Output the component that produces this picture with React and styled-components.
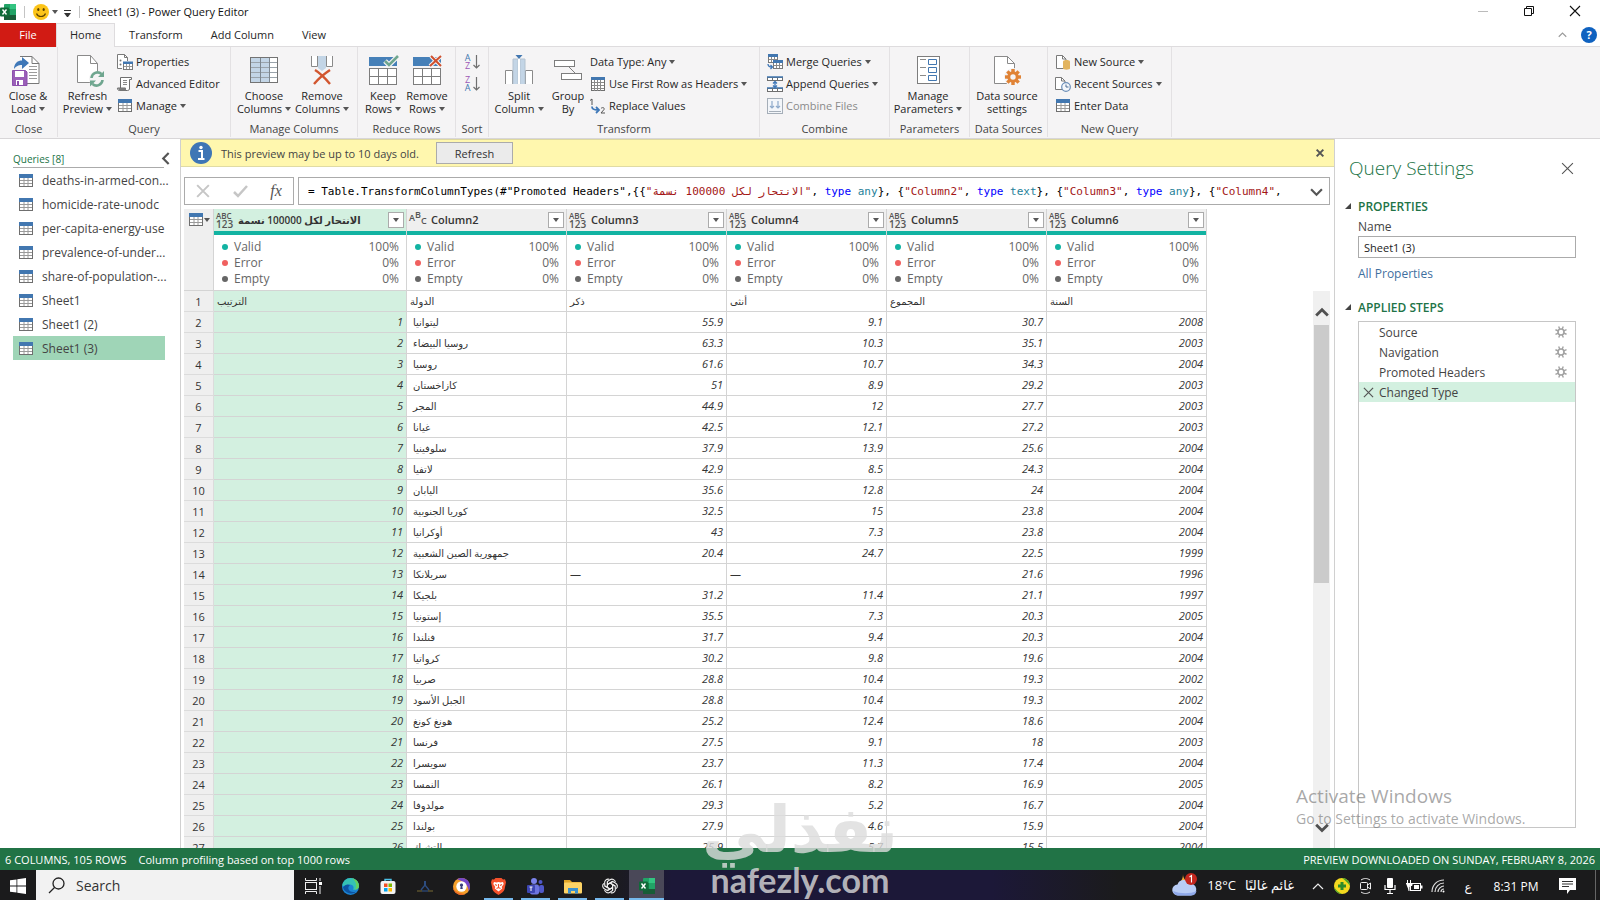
import React from 'react'
import styled, { createGlobalStyle } from 'styled-components'

const columns = [
  { name: 'الانتحار لكل 100000 نسمة', type: 'any', width: 193, selected: true },
  { name: 'Column2', type: 'text', width: 160 },
  { name: 'Column3', type: 'any', width: 160 },
  { name: 'Column4', type: 'any', width: 160 },
  { name: 'Column5', type: 'any', width: 160 },
  { name: 'Column6', type: 'any', width: 160 },
]

const rows = [
  ['الترتيب', 'الدولة', 'ذكر', 'أنثى', 'المجموع', 'السنة'],
  [1, 'ليتوانيا', 55.9, 9.1, 30.7, 2008],
  [2, 'روسيا البيضاء', 63.3, 10.3, 35.1, 2003],
  [3, 'روسيا', 61.6, 10.7, 34.3, 2004],
  [4, 'كازاخستان', 51, 8.9, 29.2, 2003],
  [5, 'المجر', 44.9, 12, 27.7, 2003],
  [6, 'غيانا', 42.5, 12.1, 27.2, 2003],
  [7, 'سلوفينيا', 37.9, 13.9, 25.6, 2004],
  [8, 'لاتفيا', 42.9, 8.5, 24.3, 2004],
  [9, 'اليابان', 35.6, 12.8, 24, 2004],
  [10, 'كوريا الجنوبية', 32.5, 15, 23.8, 2004],
  [11, 'أوكرانيا', 43, 7.3, 23.8, 2004],
  [12, 'جمهورية الصين الشعبية', 20.4, 24.7, 22.5, 1999],
  [13, 'سريلانكا', '—', '—', 21.6, 1996],
  [14, 'بلجيكا', 31.2, 11.4, 21.1, 1997],
  [15, 'إستونيا', 35.5, 7.3, 20.3, 2005],
  [16, 'فنلندا', 31.7, 9.4, 20.3, 2004],
  [17, 'كرواتيا', 30.2, 9.8, 19.6, 2004],
  [18, 'صربيا', 28.8, 10.4, 19.3, 2002],
  [19, 'الجبل الأسود', 28.8, 10.4, 19.3, 2002],
  [20, 'هونغ كونغ', 25.2, 12.4, 18.6, 2004],
  [21, 'فرنسا', 27.5, 9.1, 18, 2003],
  [22, 'سويسرا', 23.7, 11.3, 17.4, 2004],
  [23, 'النمسا', 26.1, 8.2, 16.9, 2005],
  [24, 'مولدوفا', 29.3, 5.2, 16.7, 2004],
  [25, 'بولندا', 27.9, 4.6, 15.9, 2004],
  [26, 'التشيك', 25.9, 5.7, 15.5, 2004],
]

const queries = [
  'deaths-in-armed-con...',
  'homicide-rate-unodc',
  'per-capita-energy-use',
  'prevalence-of-under...',
  'share-of-population-...',
  'Sheet1',
  'Sheet1 (2)',
  'Sheet1 (3)',
]

const stats = [
  { label: 'Valid', value: '100%', color: '#12b3a2' },
  { label: 'Error', value: '0%', color: '#f0605f' },
  { label: 'Empty', value: '0%', color: '#666666' },
]

const steps = ['Source', 'Navigation', 'Promoted Headers', 'Changed Type']

const isArabic = (v) => /[\u0600-\u06ff]/.test(v)

/* ---------- icons ---------- */

const TableIcon = () => (
  <svg width="14" height="13" viewBox="0 0 14 13">
    <rect x="0.5" y="0.5" width="13" height="12" fill="#fff" stroke="#6f6f6f" />
    <rect width="14" height="4" fill="#4277b0" />
    <path d="M5 4v8M9 4v8M1 6.5h12M1 9.5h12" stroke="#9a9a9a" />
  </svg>
)

const ExcelIcon = () => (
  <svg width="16" height="16" viewBox="0 0 16 16">
    <rect x="4" y="0" width="12" height="16" rx="1" fill="#21a366" />
    <rect x="10" y="0" width="6" height="5" fill="#33c481" />
    <rect x="4" y="5" width="6" height="6" fill="#107c41" />
    <rect x="4" y="11" width="12" height="5" fill="#185c37" />
    <rect x="0" y="3.5" width="9" height="9" rx="1" fill="#0f6b39" />
    <path d="M2.5 5.5l4 5M6.5 5.5l-4 5" stroke="#fff" strokeWidth="1.4" />
  </svg>
)

const SmileIcon = () => (
  <svg width="16" height="16" viewBox="0 0 16 16">
    <circle cx="8" cy="8" r="8" fill="#fcc419" />
    <ellipse cx="5.3" cy="5.5" rx="1.1" ry="1.6" fill="#5d4200" />
    <ellipse cx="10.7" cy="5.5" rx="1.1" ry="1.6" fill="#5d4200" />
    <path d="M3.5 9.5c1.5 4 7.5 4 9 0" fill="none" stroke="#5d4200" strokeWidth="1.2" />
  </svg>
)

const CloseLoadIcon = () => (
  <svg width="30" height="32" viewBox="2 0 30 32">
    <path d="M9 2.5h12l7 7v20H14" fill="#fff" stroke="#787878" />
    <path d="M21 2.5v7h7" fill="none" stroke="#787878" />
    <path d="M18 12.5h8M18 15.5h8M18 18.5h8M18 21.5h8M18 24.5h8" stroke="#9b9b9b" />
    <path d="M3 15c0-6 4-8.500 8-8.500V3l7 6-7 6v-4c-4 0-5.500 1-8 4z" fill="#3f78b8" />
    <path d="M1.5 16.500h13l1.500 1.500v13.500H1.500z" fill="#9a5fb8" stroke="#8c4fae" />
    <rect x="4" y="17" width="9" height="6" fill="#fff" />
    <rect x="5" y="26" width="7" height="5" fill="#fff" />
    <rect x="6" y="27" width="2" height="4" fill="#8c4fae" />
  </svg>
)

const RefreshIcon = () => (
  <svg width="30" height="32" viewBox="0 0 30 32">
    <path d="M4.5 1.5h13l7 8v19h-20z" fill="#fff" stroke="#8a8a8a" />
    <path d="M17.5 1.5v8h7" fill="none" stroke="#8a8a8a" />
    <circle cx="24" cy="25" r="8" fill="#f5f4f5" />
    <path d="M18.5 24a6 6 0 0 1 10-4M29.5 26a6 6 0 0 1-10 4" fill="none" stroke="#6fa68f" strokeWidth="2.6" />
    <path d="M31 17v6h-6zM17 32.5v-6h6z" fill="#6fa68f" />
  </svg>
)

const PropertiesIcon = () => (
  <svg width="16" height="16" viewBox="0 0 16 16">
    <path d="M5 14.5H.5v-14h7l3 3V7" fill="#fff" stroke="#7a7a7a" />
    <path d="M7.5.5v3h3" fill="none" stroke="#7a7a7a" />
    <circle cx="3.5" cy="6.5" r="1" fill="#777" />
    <circle cx="3.5" cy="10.5" r="1" fill="#777" />
    <rect x="6.5" y="8.5" width="9" height="7" fill="#fff" stroke="#7a7a7a" />
    <rect x="6" y="7.500" width="10" height="2.500" fill="#4277b0" />
    <path d="M9.5 10v5M12.5 10v5M7 12.500h8" stroke="#999" />
  </svg>
)

const EditorIcon = () => (
  <svg width="16" height="16" viewBox="0 0 16 16">
    <path d="M3.5 12V1.5h11v2h-2V13a2 2 0 0 1-2 1.500h-8A2 2 0 0 1 .5 12h8v1.500" fill="#fff" stroke="#6f6f6f" />
    <path d="M1 12h8v2.500H2z" fill="#7d7d7d" />
    <path d="M6 4.5h4M6 6.5h4M6 8.5h4" stroke="#8a8a8a" />
  </svg>
)

const ChooseColumnsIcon = () => (
  <svg width="28" height="26" viewBox="0 0 28 26">
    <rect x="0.5" y="0.5" width="27" height="25" fill="#fff" />
    <rect x="1" y="1" width="18" height="24" fill="#c3d5e6" />
    <path d="M0 5.5h28M0 10.5h28M0 15.5h28M0 20.5h28" stroke="#9aa3ab" />
    <path d="M10.5 0v26M19.5 0v26" stroke="#7d8790" />
    <rect x="0.5" y="0.5" width="27" height="25" fill="none" stroke="#737373" />
  </svg>
)

const RemoveColumnsIcon = () => (
  <svg width="24" height="30" viewBox="0 0 24 30">
    <path d="M1.5 1v10.500h6V1M16.5 1v10.500h6V1" fill="#fff" stroke="#8a8a8a" />
    <path d="M8 1h8v12l-4 3-4-3z" fill="#c3d5e6" />
    <path d="M5 15c5 3 10 8 15 14M20 15c-6 4-11 8-16 14" stroke="#d2562f" strokeWidth="2.4" fill="none" />
  </svg>
)

const RowsIcon = ({ remove }) => (
  <svg width="30" height="30" viewBox="0 0 30 30">
    <rect x="1" y="2" width="28" height="9" fill="#4680b8" />
    <rect x="1.5" y="13.5" width="27" height="16" fill="#fff" stroke="#7d7d7d" />
    <path d="M10.5 13v17M19.5 13v17M1 21.5h28" stroke="#7d7d7d" />
    {remove ? (
      <>
        <path d="M19 1l10 10M29 1L18 11" stroke="#f5f4f5" strokeWidth="4" />
        <path d="M19 1l10 10M29 1L18 11" stroke="#cf4f2d" strokeWidth="2" />
      </>
    ) : (
      <>
        <path d="M17 6l4 4 9-9" fill="none" stroke="#f5f4f5" strokeWidth="5" />
        <path d="M17 6l4 4 9-9" fill="none" stroke="#6fa68f" strokeWidth="2.6" />
      </>
    )}
  </svg>
)

const SplitIcon = () => (
  <svg width="28" height="30" viewBox="0 0 28 30">
    <path d="M.5 29V15.500h7V29M20.500 29V15.500h7V29" fill="#fff" stroke="#8a8a8a" />
    <path d="M8 29V4h5v25M15 29V4h5v25" fill="#c3d5e6" stroke="#b3c2d0" />
    <path d="M13 4h2v25h-2z" fill="#fff" />
    <path d="M10.5 0h7L14 4z" fill="#4277b0" />
  </svg>
)

const GroupIcon = () => (
  <svg width="28" height="22" viewBox="0 0 28 22">
    <path d="M13 6l8 8" stroke="#7d7d7d" />
    <rect x="0.5" y="1.5" width="20" height="6" fill="#fff" stroke="#7d7d7d" />
    <rect x="7.5" y="14.5" width="20" height="6" fill="#fff" stroke="#7d7d7d" />
  </svg>
)

const SortArrow = () => (
  <svg width="7" height="16" viewBox="0 0 7 16">
    <path d="M3.5 1v13M.5 11l3 3 3-3" fill="none" stroke="#6f6f6f" strokeWidth="1.2" />
  </svg>
)

const HeadersIcon = () => (
  <svg width="14" height="14" viewBox="0 0 14 14">
    <rect x="0.5" y="0.5" width="13" height="13" fill="#fff" stroke="#6f6f6f" />
    <rect width="14" height="3" fill="#4277b0" />
    <path d="M3.5 3v11M6.5 3v11M9.5 3v11M1 5.5h12M1 8.5h12M1 11.5h12" stroke="#8a8a8a" />
  </svg>
)

const ReplaceIcon = () => (
  <svg width="16" height="16" viewBox="0 0 16 16">
    <path d="M0 2.500L2 1v6M11 10.500c1-1.500 4-1 3 1L11 15h4" fill="none" stroke="#555" />
    <path d="M2 8.500c0 3 2 3.500 6 3.500M6 9l3 3-3 3" fill="none" stroke="#3f78b8" strokeWidth="1.8" />
  </svg>
)

const MergeIcon = () => (
  <svg width="16" height="16" viewBox="0 0 16 16">
    <rect x="1.5" y="1.5" width="9" height="7" fill="#fff" stroke="#7a7a7a" />
    <rect x="1" y="0" width="10" height="3" fill="#4277b0" />
    <path d="M4.5 3v5M7.5 3v5M2 5.5h8" stroke="#8a8a8a" />
    <rect x="6.5" y="7.5" width="9" height="7" fill="#fff" stroke="#7a7a7a" />
    <rect x="6" y="6" width="10" height="3" fill="#4277b0" />
    <path d="M9.5 9v5M12.5 9v5M7 11.5h8" stroke="#8a8a8a" />
    <path d="M1 10c0 2 1 3 4 3M3.500 11l2 2-2 2" fill="none" stroke="#3f78b8" strokeWidth="1.3" />
  </svg>
)

const AppendIcon = () => (
  <svg width="16" height="16" viewBox="0 0 16 16">
    <rect x="0.5" y="1.5" width="15" height="3" fill="#fff" stroke="#6f6f6f" />
    <rect x="0.5" y="12.5" width="15" height="3" fill="#fff" stroke="#6f6f6f" />
    <path d="M0 1h16M0 12h16" stroke="#4277b0" strokeWidth="1.6" />
    <path d="M5.5 2v3M10.5 2v3M5.5 12v3M10.5 12v3" stroke="#6f6f6f" />
    <path d="M8 5.500v6M6 7.500l2-2 2 2M6 9.500l2 2 2-2" fill="none" stroke="#3f78b8" strokeWidth="1.3" />
  </svg>
)

const CombineIcon = () => (
  <svg width="16" height="16" viewBox="0 0 16 16">
    <rect x="0.5" y="0.5" width="15" height="15" fill="#f3f6fa" stroke="#a5aeb8" />
    <path d="M5 3v7M3 8l2 2 2-2M11 3v7M9 8l2 2 2-2" fill="none" stroke="#8fabcb" strokeWidth="1.2" />
    <path d="M2 13.5h12" stroke="#a5aeb8" />
  </svg>
)

const ParametersIcon = () => (
  <svg width="23" height="28" viewBox="0 0 23 28">
    <rect x="0.5" y="0.5" width="22" height="27" fill="#fff" stroke="#7d7d7d" />
    <path d="M3 3.5h6M3 11.5h6M3 19.5h6" stroke="#8a8a8a" />
    <path d="M11.5 3.500h8v5h-8zM11.5 11.500h8v5h-8zM11.5 19.500h8v5h-8z" fill="#fff" stroke="#4277b0" />
  </svg>
)

const SourceSettingsIcon = () => (
  <svg width="28" height="30" viewBox="0 0 28 30">
    <path d="M1.5 1.500h13l7 7v20h-20z" fill="#fff" stroke="#8a8a8a" />
    <path d="M14.5 1.500v7h7" fill="none" stroke="#8a8a8a" />
    <circle cx="20" cy="22" r="9" fill="#f5f4f5" />
    {[0, 45, 90, 135].map((a) => (
      <path key={a} d="M20 14v16" transform={`rotate(${a} 20 22)`} stroke="#e08336" strokeWidth="3.4" />
    ))}
    <circle cx="20" cy="22" r="4.2" fill="#f5f4f5" stroke="#e08336" strokeWidth="3" />
  </svg>
)

const NewSourceIcon = () => (
  <svg width="16" height="16" viewBox="0 0 16 16">
    <path d="M1.5 1.500h6l3.500 3.500v9.500H1.500z" fill="#fff" stroke="#7a7a7a" />
    <path d="M7.5 1.500V5H11" fill="none" stroke="#7a7a7a" />
    <path d="M8 7.500c0-2 7-2 7 0v7c0 1.500-7 1.500-7 0z" fill="#e2b45f" />
  </svg>
)

const RecentIcon = () => (
  <svg width="16" height="16" viewBox="0 0 16 16">
    <path d="M.5 1.500h6l3.500 3.500v8.500H.5z" fill="#fff" stroke="#7a7a7a" />
    <path d="M6.5 1.500V5H10" fill="none" stroke="#7a7a7a" />
    <circle cx="11" cy="11" r="4.3" fill="#f4f7fb" stroke="#6c8fb8" strokeWidth="1.2" />
    <path d="M11 8.500V11h2.500" fill="none" stroke="#4a6c94" />
  </svg>
)

const Cross = ({ size = 12, color = '#555', weight = 1 }) => (
  <svg width={size} height={size} viewBox="0 0 12 12">
    <path d="M1 1l10 10M11 1L1 11" stroke={color} strokeWidth={weight} />
  </svg>
)

const Chevron = ({ dir = 'down', size = 12, color = '#555', weight = 2 }) => {
  const d = { down: 'M1 4l5 5 5-5', up: 'M1 9l5-5 5 5', left: 'M8 1L3 6l5 5' }[dir]
  return (
    <svg width={size} height={size} viewBox="0 0 12 12">
      <path d={d} fill="none" stroke={color} strokeWidth={weight} />
    </svg>
  )
}

const GearIcon = () => (
  <svg width="12" height="12" viewBox="0 0 12 12">
    {[22, 67, 112, 157].map((a) => (
      <path key={a} d="M6 0v12" transform={`rotate(${a} 6 6)`} stroke="#a2a2a2" strokeWidth="1.4" />
    ))}
    <circle cx="6" cy="6" r="3" fill="#fff" stroke="#a2a2a2" strokeWidth="1.6" />
  </svg>
)

const InfoIcon = () => (
  <svg width="22" height="22" viewBox="0 0 22 22">
    <circle cx="11" cy="11" r="11" fill="#3f76b5" />
    <circle cx="11" cy="5.5" r="1.7" fill="#fff" />
    <path d="M8.5 9h3.500v7.500M8 17h6.500" fill="none" stroke="#fff" strokeWidth="2" />
  </svg>
)

/* ---------- taskbar icons ---------- */

const WindowsIcon = () => (
  <svg width="16" height="16" viewBox="0 0 16 16" fill="#fff">
    <path d="M0 2.300l6.500-.9v6.200H0zM7.300 1.300L16 0v7.600H7.300zM0 8.400h6.500v6.200L0 13.700zM7.300 8.400H16V16l-8.700-1.300z" />
  </svg>
)

const SearchIcon = () => (
  <svg width="17" height="17" viewBox="0 0 17 17">
    <circle cx="10.5" cy="6.5" r="5.5" fill="none" stroke="#222" strokeWidth="1.3" />
    <path d="M6.5 10.500L1 16" stroke="#222" strokeWidth="1.3" />
  </svg>
)

const TaskViewIcon = () => (
  <svg width="18" height="16" viewBox="0 0 18 16">
    <path d="M1.5 0v2.500h11V0M1.5 16v-2.500h11V16" fill="none" stroke="#eee" />
    <rect x="1.5" y="4.5" width="11" height="7" fill="none" stroke="#eee" />
    <path d="M16 0v3M16 8v8" stroke="#eee" />
    <rect x="15" y="4" width="3" height="3" fill="#fff" />
  </svg>
)

const EdgeIcon = () => (
  <svg width="17" height="17" viewBox="0 0 17 17">
    <circle cx="8.5" cy="8.5" r="8.5" fill="#1b84d3" />
    <path d="M.2 7.500C1 3 4.500 0 8.500 0 13.500 0 17 3.800 17 8c0 3-3 4.500-6 3.500 1.500-2 0-5-3-5-4 0-6 2.500-7.800 1z" fill="#35c2b4" />
    <path d="M10 .3C14 1 17 4 17 8c0 2-1.500 3.500-4 3.800C15 8 14 3 10 .3z" fill="#62d05f" />
    <path d="M1 9.500c2-3.500 5-3.500 7-2.500-3 2-2 7 3.500 7 1.500 0 3-.5 4-1.500A8.500 8.500 0 0 1 1 9.500z" fill="#0d53a1" />
  </svg>
)

const StoreIcon = () => (
  <svg width="16" height="17" viewBox="0 0 16 17">
    <path d="M5 4V1.500h6V4" fill="none" stroke="#4cc2e8" strokeWidth="1.4" />
    <rect x="0.5" y="3" width="15" height="13" rx="2" fill="#f3f3f3" />
    <rect x="4" y="5.5" width="3.5" height="3.5" fill="#f25022" />
    <rect x="8.5" y="5.5" width="3.5" height="3.5" fill="#7fba00" />
    <rect x="4" y="10" width="3.5" height="3.5" fill="#00a4ef" />
    <rect x="8.5" y="10" width="3.5" height="3.5" fill="#ffb900" />
  </svg>
)

const HangerIcon = () => (
  <svg width="16" height="14" viewBox="0 0 16 14">
    <path d="M8 2v5" stroke="#2d4d80" strokeWidth="2" />
    <path d="M4 11l4-5 4 5" fill="none" stroke="#2d4d80" strokeWidth="1.4" />
    <path d="M0 12h5M11 12h5" stroke="#7a6c34" strokeWidth="1.2" />
    <path d="M5 12h6" stroke="#2d4d80" strokeWidth="1.2" />
  </svg>
)

const ShieldBrowserIcon = () => (
  <svg width="17" height="17" viewBox="0 0 17 17">
    <circle cx="8.5" cy="8.5" r="8.5" fill="#f5a02a" />
    <path d="M4 1.300A8.500 8.500 0 0 1 17 8.500c0 2-.6 3.500-1.500 5C16 8 12 4 4 1.300z" fill="#7446c9" />
    <path d="M0 8.500c1 5 6 7 12.500 7.500A8.500 8.500 0 0 1 0 8.500z" fill="#ee6b26" />
    <circle cx="8.5" cy="8.5" r="5.2" fill="#fff" />
    <path d="M8.5 5.500a1.600 1.600 0 0 1 .8 3l.5 2.500H7.200l.5-2.500a1.600 1.600 0 0 1 .8-3z" fill="#3b3f7e" />
  </svg>
)

const BraveIcon = () => (
  <svg width="15" height="17" viewBox="0 0 15 17">
    <path d="M3 1.500L4.500 0h6L12 1.500l2-.2 1 3-1.500 7.200c-.5 2-3.500 4-6 5.500-2.500-1.500-5.500-3.500-6-5.500L0 4.300l1-3z" fill="#f4512c" />
    <path d="M3 4l2.500.5L7.500 4l2 .5L12 4l.7 2-2 3 .5 1.500-3.700 3-3.700-3L4.300 9l-2-3z" fill="#fff" />
    <path d="M4 6.500l2 1M11 6.500l-2 1M7.500 6v4M5.500 10.500l2-1 2 1" fill="none" stroke="#f4512c" strokeWidth="1.1" />
  </svg>
)

const TeamsIcon = () => (
  <svg width="17" height="17" viewBox="0 0 17 17">
    <circle cx="7" cy="3" r="3" fill="#7b83eb" />
    <circle cx="13.5" cy="4" r="2" fill="#5059c9" />
    <rect x="3" y="6.5" width="9" height="10" rx="2" fill="#6d75e0" />
    <rect x="12" y="7" width="5" height="8" rx="2" fill="#5059c9" />
    <rect x="0" y="7" width="8" height="8" rx="1" fill="#3d46b3" />
    <path d="M4 9v4M2.5 9h3" stroke="#fff" />
  </svg>
)

const FolderIcon = () => (
  <svg width="18" height="15" viewBox="0 0 18 15">
    <path d="M0 1h6l2 2h9v3H0z" fill="#e0a526" />
    <rect y="3.5" width="18" height="11" rx="1" fill="#fdd466" />
    <path d="M4 14.500V9h10v5.500h-3V12H7v2.500z" fill="#3c92cf" />
  </svg>
)

const KnotIcon = () => (
  <svg width="18" height="18" viewBox="-9 -9 18 18" fill="none" stroke="#f0f0f0" strokeWidth="1.1">
    {[0, 60, 120, 180, 240, 300].map((a) => (
      <path key={a} transform={`rotate(${a})`} d="M-2.600 1.500V-4.500L0-6.200A3.500 3.500 0 0 1 5.400-4M-2.600-1.500L2.600-4.500" />
    ))}
  </svg>
)

const WeatherIcon = () => (
  <svg width="26" height="24" viewBox="0 0 26 24">
    <path d="M11 1c0 4 2 7 7 8-2 4-9 5-12 1C9 9 11 6 11 1z" fill="#f4a93a" />
    <path d="M6 22.500a5.500 5.500 0 0 1-.5-11 6.500 6.500 0 0 1 12-1 6 6 0 0 1 1.500 12z" fill="#b9cdf6" />
    <path d="M1 18c1 3 3 4.500 5 4.500h13c3 0 5-1.500 5.500-4.500-6 3-16 3-23.500 0z" fill="#8fa9ea" />
    <circle cx="19" cy="6" r="6" fill="#c4261d" />
    <path d="M17.500 4l2-1.500v7" fill="none" stroke="#fff" strokeWidth="1.1" />
  </svg>
)

const PlusDiscIcon = () => (
  <svg width="16" height="16" viewBox="0 0 16 16">
    <circle cx="8" cy="8" r="8" fill="#f4d91f" />
    <path d="M8 0a8 8 0 0 1 8 8c-2-3-5-6-8-8z" fill="#4aa62b" />
    <path d="M0 9c2 3 4 5 8 7a8 8 0 0 1-8-7z" fill="#4aa62b" />
    <path d="M8 4v8M4 8h8" stroke="#2d8a2a" strokeWidth="3" />
  </svg>
)

const CameraIcon = () => (
  <svg width="14" height="16" viewBox="0 0 14 16" fill="none" stroke="#eee">
    <rect x="1.5" y="4.5" width="7" height="7" rx="1" />
    <path d="M8.5 7l3-2v6l-3-2M2 2c3-2 6-2 9 0M2 14c3 2 6 2 9 0" />
  </svg>
)

const MicIcon = () => (
  <svg width="12" height="16" viewBox="0 0 12 16">
    <rect x="3" y="0" width="6" height="10" rx="1" fill="#fff" />
    <path d="M1 7v4.500h10V7M6 12v3.500M3 15.500h6" fill="none" stroke="#fff" strokeWidth="1.2" />
  </svg>
)

const BatteryIcon = () => (
  <svg width="17" height="13" viewBox="0 0 17 13">
    <rect x="4.5" y="3.5" width="10" height="7" fill="none" stroke="#fff" />
    <rect x="8" y="5" width="5" height="4" fill="#fff" />
    <rect x="15" y="5.5" width="1.5" height="3" fill="#fff" />
    <path d="M1.5 0v3M4.500 0v3M0 3.500h6v2H4L3 7v4" fill="#fff" stroke="#fff" />
  </svg>
)

const WifiIcon = () => (
  <svg width="14" height="14" viewBox="0 0 14 14" fill="none" stroke="#ddd" strokeWidth="1.2">
    <path d="M1 13C1 6 6 1 13 1M4 13c0-5 4-9 9-9M7 13c0-3 3-6 6-6M10 13c0-2 1-3 3-3" />
    <circle cx="12.5" cy="12.5" r="1" fill="#fff" stroke="none" />
  </svg>
)

const NoticeIcon = () => (
  <svg width="17" height="16" viewBox="0 0 17 16">
    <path d="M0 0h17v12h-6l-3 4v-4H0z" fill="#fff" />
    <path d="M3 3.500h11M3 6h11M3 8.500h7" stroke="#333" />
  </svg>
)

/* ---------- page ---------- */

function BigButton({ icon, top, bottom, caret, width }) {
  return (
    <BigBtn $width={width}>
      <BigIcon>{icon}</BigIcon>
      <span>{top}</span>
      <span>{bottom}{caret && <Caret />}</span>
    </BigBtn>
  )
}

function SmallButton({ icon, label, caret, disabled }) {
  return (
    <SmallBtn disabled={disabled}>
      {icon && <SmallIcon>{icon}</SmallIcon>}
      {label}{caret && <Caret />}
    </SmallBtn>
  )
}

function RibbonGroup({ label, width, indent, children }) {
  return (
    <Group $width={width}>
      <GroupBody $indent={indent}>{children}</GroupBody>
      <GroupLabel>{label}</GroupLabel>
    </Group>
  )
}

function Ribbon() {
  return (
    <RibbonBar>
      <RibbonGroup label="Close" width={58}>
        <BigButton icon={<CloseLoadIcon />} top="Close &" bottom="Load" caret width={56} />
      </RibbonGroup>
      <RibbonGroup label="Query" width={173}>
        <BigButton icon={<RefreshIcon />} top="Refresh" bottom="Preview" caret width={59} />
        <SmallList>
          <SmallButton icon={<PropertiesIcon />} label="Properties" />
          <SmallButton icon={<EditorIcon />} label="Advanced Editor" />
          <SmallButton icon={<TableIcon />} label="Manage" caret />
        </SmallList>
      </RibbonGroup>
      <RibbonGroup label="Manage Columns" width={127} indent={4}>
        <BigButton icon={<ChooseColumnsIcon />} top="Choose" bottom="Columns" caret width={58} />
        <BigButton icon={<RemoveColumnsIcon />} top="Remove" bottom="Columns" caret width={58} />
      </RibbonGroup>
      <RibbonGroup label="Reduce Rows" width={98} indent={3}>
        <BigButton icon={<RowsIcon />} top="Keep" bottom="Rows" caret width={44} />
        <BigButton icon={<RowsIcon remove />} top="Remove" bottom="Rows" caret width={44} />
      </RibbonGroup>
      <RibbonGroup label="Sort" width={33} indent={8}>
        <SmallList>
          <SortBtn aria-label="Sort ascending">
            <SortLetters><Letter $blue>A</Letter><Letter>Z</Letter></SortLetters><SortArrow />
          </SortBtn>
          <SortBtn aria-label="Sort descending">
            <SortLetters><Letter>Z</Letter><Letter $blue>A</Letter></SortLetters><SortArrow />
          </SortBtn>
        </SmallList>
      </RibbonGroup>
      <RibbonGroup label="Transform" width={271} indent={3}>
        <BigButton icon={<SplitIcon />} top="Split" bottom="Column" caret width={54} />
        <BigButton icon={<GroupIcon />} top="Group" bottom="By" width={44} />
        <SmallList>
          <SmallButton label="Data Type: Any" caret />
          <SmallButton icon={<HeadersIcon />} label="Use First Row as Headers" caret />
          <SmallButton icon={<ReplaceIcon />} label="Replace Values" />
        </SmallList>
      </RibbonGroup>
      <RibbonGroup label="Combine" width={130} indent={7}>
        <SmallList>
          <SmallButton icon={<MergeIcon />} label="Merge Queries" caret />
          <SmallButton icon={<AppendIcon />} label="Append Queries" caret />
          <SmallButton icon={<CombineIcon />} label="Combine Files" disabled />
        </SmallList>
      </RibbonGroup>
      <RibbonGroup label="Parameters" width={80}>
        <BigButton icon={<ParametersIcon />} top="Manage" bottom="Parameters" caret width={76} />
      </RibbonGroup>
      <RibbonGroup label="Data Sources" width={78}>
        <BigButton icon={<SourceSettingsIcon />} top="Data source" bottom="settings" width={74} />
      </RibbonGroup>
      <RibbonGroup label="New Query" width={124} indent={7}>
        <SmallList>
          <SmallButton icon={<NewSourceIcon />} label="New Source" caret />
          <SmallButton icon={<RecentIcon />} label="Recent Sources" caret />
          <SmallButton icon={<TableIcon />} label="Enter Data" />
        </SmallList>
      </RibbonGroup>
    </RibbonBar>
  )
}

function DataGrid() {
  return (
    <Table>
      <colgroup>
        <Col $width={30} />
        {columns.map((c) => <Col key={c.name} $width={c.width} />)}
      </colgroup>
      <thead>
        <tr>
          <HeadCell>
            <HeadInner><TableIcon /><Caret /></HeadInner>
          </HeadCell>
          {columns.map((c) => (
            <HeadCell key={c.name} $selected={c.selected}>
              <HeadInner>
                {c.type === 'text'
                  ? <TextType><span>A</span><span>B</span><span>C</span></TextType>
                  : <AnyType><small>ABC</small><span>123</span></AnyType>}
                <HeadName $arabic={isArabic(c.name)}>{c.name}</HeadName>
                <FilterBtn aria-label={`Filter ${c.name}`}><Caret /></FilterBtn>
              </HeadInner>
              <QualityBar />
            </HeadCell>
          ))}
        </tr>
        <tr>
          <StatCell $corner />
          {columns.map((c) => (
            <StatCell key={c.name}>
              {stats.map((s) => (
                <Stat key={s.label}>
                  <Dot $color={s.color} />
                  {s.label}
                  <b>{s.value}</b>
                </Stat>
              ))}
            </StatCell>
          ))}
        </tr>
      </thead>
      <tbody>
        {rows.map((row, i) => (
          <tr key={i}>
            <NumberCell scope="row">{i + 1}</NumberCell>
            {row.map((v, j) => (
              <Cell
                key={j}
                $number={typeof v === 'number'}
                $selected={j === 0}
                $arabic={isArabic(v)}
                $inset={i > 0 && j === 1}
              >
                {v}
              </Cell>
            ))}
          </tr>
        ))}
      </tbody>
    </Table>
  )
}

function App() {
  return (
    <Window>
      <GlobalStyle />
      <TitleBar>
        <ExcelIcon />
        <Divider />
        <SmileIcon />
        <Caret />
        <QuickMenu />
        <Divider />
        <Title>Sheet1 (3) - Power Query Editor</Title>
        <WindowControls>
          <button aria-label="Minimize">
            <svg width="10" height="10"><path d="M0 5.500h10" stroke="#bbb" /></svg>
          </button>
          <button aria-label="Restore">
            <svg width="10" height="10" fill="none" stroke="#111"><path d="M.5 2.500h7v7h-7zM2.500 2V.5h7v7H8" /></svg>
          </button>
          <button aria-label="Close"><Cross size={12} color="#111" weight={1.1} /></button>
        </WindowControls>
      </TitleBar>
      <Tabs>
        <FileTab>File</FileTab>
        <Tab $active>Home</Tab>
        <Tab>Transform</Tab>
        <Tab>Add Column</Tab>
        <Tab>View</Tab>
        <TabsEnd>
          <Chevron dir="up" size={9} color="#9a9a9a" weight={1.5} />
          <Help aria-label="Help">?</Help>
        </TabsEnd>
      </Tabs>
      <Ribbon />

      <Body>
        <QueriesPane>
          <QueriesHead>
            <h2>Queries [8]</h2>
            <Chevron dir="left" size={13} />
          </QueriesHead>
          <QueryList>
            {queries.map((q) => (
              <QueryItem key={q} $active={q === 'Sheet1 (3)'}><TableIcon />{q}</QueryItem>
            ))}
          </QueryList>
        </QueriesPane>

        <Main>
          <InfoBar>
            <InfoIcon />
            <p>This preview may be up to 10 days old.</p>
            <RefreshBtn>Refresh</RefreshBtn>
            <PlainBtn aria-label="Dismiss"><Cross size={8} weight={3} /></PlainBtn>
          </InfoBar>
          <FormulaRow>
            <FormulaTools>
              <button aria-label="Cancel"><Cross size={14} color="#c6c6c6" weight={1.7} /></button>
              <button aria-label="Accept">
                <svg width="15" height="13"><path d="M1 7l4 4 9-10" fill="none" stroke="#c6c6c6" strokeWidth="2.5" /></svg>
              </button>
              <Fx aria-label="Insert step">fx</Fx>
            </FormulaTools>
            <FormulaBox>
              <code>
                {'= Table.TransformColumnTypes(#"Promoted Headers",{{'}
                <Str>"</Str><Str><bdi>الانتحار لكل 100000 نسمة</bdi></Str><Str>"</Str>, <Kw>type</Kw> <Ty>any</Ty>
                {'}, {'}<Str>"Column2"</Str>, <Kw>type</Kw> <Ty>text</Ty>
                {'}, {'}<Str>"Column3"</Str>, <Kw>type</Kw> <Ty>any</Ty>
                {'}, {'}<Str>"Column4"</Str>,
              </code>
              <PlainBtn aria-label="Expand formula"><Chevron size={13} /></PlainBtn>
            </FormulaBox>
          </FormulaRow>
          <GridArea>
            <GridScroll><DataGrid /></GridScroll>
            <ScrollBar>
              <Chevron dir="up" size={14} color="#505050" weight={2.4} />
              <Thumb />
              <Chevron dir="down" size={14} color="#505050" weight={2.4} />
            </ScrollBar>
          </GridArea>
        </Main>

        <Settings>
          <SettingsHead>
            <h1>Query Settings</h1>
            <PlainBtn aria-label="Close settings"><Cross size={13} /></PlainBtn>
          </SettingsHead>
          <SectionTitle><Fold />PROPERTIES</SectionTitle>
          <SectionBody>
            <label htmlFor="query-name">Name</label>
            <NameInput id="query-name" defaultValue="Sheet1 (3)" />
            <a href="#all">All Properties</a>
          </SectionBody>
          <SectionTitle><Fold />APPLIED STEPS</SectionTitle>
          <StepList>
            {steps.map((s, i) => (
              <Step key={s} $active={i === 3}>
                <i>{i === 3 && <Cross size={11} weight={1.3} />}</i>
                <span>{s}</span>
                {i < 3 && <GearIcon />}
              </Step>
            ))}
          </StepList>
        </Settings>
      </Body>

      <StatusBar>
        <span>6 COLUMNS, 105 ROWS</span>
        <span>Column profiling based on top 1000 rows</span>
        <StatusRight>PREVIEW DOWNLOADED ON SUNDAY, FEBRUARY 8, 2026</StatusRight>
      </StatusBar>

      <Taskbar>
        <TaskBtn $width={36} aria-label="Start"><WindowsIcon /></TaskBtn>
        <SearchBox><SearchIcon /><input aria-label="Search" placeholder="Search" /></SearchBox>
        <TaskBtn $width={38} aria-label="Task view"><TaskViewIcon /></TaskBtn>
        <TaskBtn aria-label="Edge"><EdgeIcon /></TaskBtn>
        <TaskBtn aria-label="Store"><StoreIcon /></TaskBtn>
        <TaskBtn aria-label="Hanger"><HangerIcon /></TaskBtn>
        <TaskBtn aria-label="Secure browser"><ShieldBrowserIcon /></TaskBtn>
        <TaskBtn $open aria-label="Brave"><BraveIcon /></TaskBtn>
        <TaskBtn $open aria-label="Teams"><TeamsIcon /></TaskBtn>
        <TaskBtn $open aria-label="Files"><FolderIcon /></TaskBtn>
        <TaskBtn $open aria-label="ChatGPT"><KnotIcon /></TaskBtn>
        <TaskBtn $open $active aria-label="Excel"><ExcelIcon /></TaskBtn>
        <Tray>
          <Weather><WeatherIcon /><span>18°C</span><span lang="ar">غائم غالبًا</span></Weather>
          <TaskBtn $width={24} aria-label="Hidden icons"><Chevron dir="up" color="#eee" weight={1.2} /></TaskBtn>
          <TaskBtn $width={24} aria-label="Security"><PlusDiscIcon /></TaskBtn>
          <TaskBtn $width={24} aria-label="Camera"><CameraIcon /></TaskBtn>
          <TaskBtn $width={24} aria-label="Microphone"><MicIcon /></TaskBtn>
          <TaskBtn $width={24} aria-label="Battery"><BatteryIcon /></TaskBtn>
          <TaskBtn $width={24} aria-label="Network"><WifiIcon /></TaskBtn>
          <TaskBtn $width={36}>ع</TaskBtn>
          <TaskBtn $width={60}>8:31 PM</TaskBtn>
          <TaskBtn $width={42} aria-label="Notifications"><NoticeIcon /></TaskBtn>
          <ShowDesktop />
        </Tray>
      </Taskbar>

      <Activate>
        <strong>Activate Windows</strong>
        <span>Go to Settings to activate Windows.</span>
      </Activate>
      <Watermark>
        <bdi>نفذلي</bdi>
        <span>nafezly.com</span>
      </Watermark>
    </Window>
  )
}

export default App

/* ---------- styles ---------- */

const GlobalStyle = createGlobalStyle`
  * { box-sizing: border-box; }
  body {
    margin: 0;
    font-family: "Open Sans", "DejaVu Sans", sans-serif;
    font-size: 11px;
    color: #333;
    background: #fff;
  }
  button {
    font: inherit;
    color: inherit;
    background: none;
    border: 0;
    padding: 0;
  }
  h1, h2, p { margin: 0; font-weight: 400; }
  svg { display: block; flex: none; overflow: visible; }
`

const Window = styled.div`
  position: relative;
  display: flex;
  flex-direction: column;
  height: 100vh;
  overflow: hidden;
`

const Caret = styled.i`
  display: inline-block;
  flex: none;
  width: 0;
  height: 0;
  margin-left: 3px;
  vertical-align: 2px;
  border: 3px solid transparent;
  border-top: 4px solid #555;
  border-bottom: 0;
`

const TitleBar = styled.header`
  display: flex;
  align-items: center;
  height: 23px;
  flex: none;
`
const Divider = styled.i`
  width: 1px;
  height: 12px;
  margin: 0 8px;
  background: #c4c4c4;
`
const QuickMenu = styled.i`
  width: 7px;
  margin: 3px 0 0 6px;
  border-top: 1px solid #333;

  &::after {
    content: '';
    display: block;
    margin-top: 2px;
    border: 3px solid transparent;
    border-top: 4px solid #333;
    border-bottom: 0;
  }
`
const Title = styled.span`
  font-size: 11px;
  color: #111;
`
const WindowControls = styled.div`
  display: flex;
  margin-left: auto;
  padding-right: 2px;

  button {
    display: flex;
    align-items: center;
    justify-content: center;
    width: 46px;
    height: 20px;
    margin-bottom: 2px;
  }
`

const Tabs = styled.nav`
  display: flex;
  align-items: stretch;
  height: 24px;
  flex: none;
  border-bottom: 1px solid #dedcde;
`
const Tab = styled.button`
  padding: 0 13px 2px;
  margin-bottom: -1px;
  color: #262626;
  border: 1px solid ${props => props.$active ? '#dedcde' : 'transparent'};
  border-width: 1px 1px 0;
  background: ${props => props.$active ? '#f5f4f5' : 'none'};
`
const FileTab = styled(Tab)`
  width: 56px;
  color: #fff;
  background: #d11b14;
  border: 0;
`
const TabsEnd = styled.div`
  display: flex;
  align-items: center;
  gap: 14px;
  margin-left: auto;
  padding-right: 3px;
`
const Help = styled.button`
  width: 16px;
  height: 16px;
  line-height: 16px;
  border-radius: 8px;
  background: #0f62c0;
  color: #fff;
  font-weight: 700;
`

const RibbonBar = styled.div`
  display: flex;
  flex: none;
  height: 92px;
  background: #f5f4f5;
  border-bottom: 1px solid #d8d6d8;
  color: #262626;
`
const Group = styled.section`
  display: flex;
  flex-direction: column;
  justify-content: space-between;
  width: ${props => props.$width}px;
  margin-bottom: 1px;
  border-right: 1px solid #e3e1e3;
`
const GroupBody = styled.div`
  display: flex;
  padding: 4px 0 0 ${props => props.$indent || 0}px;
`
const GroupLabel = styled.div`
  text-align: center;
  line-height: 17px;
  color: #444;
  white-space: nowrap;
`
const BigBtn = styled.button`
  display: flex;
  flex-direction: column;
  align-items: center;
  width: ${props => props.$width}px;
  line-height: 13px;
  white-space: nowrap;
`
const BigIcon = styled.span`
  display: flex;
  align-items: center;
  height: 38px;
`
const SmallList = styled.div`
  display: flex;
  flex-direction: column;
  align-items: flex-start;
`
const SmallBtn = styled.button`
  display: flex;
  align-items: center;
  height: 22px;
  padding-bottom: 1px;
  white-space: nowrap;
  color: ${props => props.disabled ? '#8a8a8a' : 'inherit'};
`
const SmallIcon = styled.span`
  display: flex;
  justify-content: center;
  width: 16px;
  margin-right: 3px;
`
const SortBtn = styled.button`
  display: flex;
  align-items: center;
  gap: 2px;
  height: 22px;
`
const SortLetters = styled.span`
  display: flex;
  flex-direction: column;
  width: 7px;
  font-size: 9px;
  line-height: 8px;
`
const Letter = styled.span`
  color: ${props => props.$blue ? '#4277b0' : '#9b59b6'};
`

const Body = styled.div`
  display: flex;
  flex: 1;
  min-height: 0;
`

const QueriesPane = styled.aside`
  flex: none;
  width: 181px;
  padding: 13px 15px 0 13px;
  border-right: 1px solid #d0d0d0;
`
const QueriesHead = styled.div`
  display: flex;
  align-items: center;
  height: 16px;
  margin-right: -8px;

  h2 {
    flex: 1;
    font-size: 10px;
    line-height: 15px;
    color: #217346;
    border-bottom: 1px solid #ababab;
  }
  svg { margin: -4px 0 0 -4px; }
`
const QueryList = styled.ul`
  margin: 0;
  padding: 0;
  list-style: none;
`
const QueryItem = styled.li`
  display: flex;
  align-items: center;
  gap: 9px;
  height: 24px;
  padding-left: 6px;
  font-size: 12px;
  white-space: nowrap;
  color: #444;
  background: ${props => props.$active ? '#9fd5b7' : 'none'};
`

const Main = styled.main`
  display: flex;
  flex-direction: column;
  flex: 1;
  min-width: 0;
  border-right: 1px solid #d0d0d0;
`
const InfoBar = styled.div`
  display: flex;
  align-items: center;
  height: 28px;
  flex: none;
  padding: 0 10px 0 9px;
  background: #fff7ae;
  border-top: 1px solid #ddd8a0;
  border-bottom: 1px solid #e0dba4;

  p { width: 215px; margin-left: 9px; color: #444; }
`
const RefreshBtn = styled.button`
  width: 77px;
  height: 22px;
  margin-right: auto;
  background: #ebebeb;
  border: 1px solid #ababab;
`
const PlainBtn = styled.button`
  display: flex;
`
const FormulaRow = styled.div`
  display: flex;
  gap: 4px;
  flex: none;
  padding: 10px 4px 4px 3px;
`
const FormulaTools = styled.div`
  display: flex;
  align-items: center;
  justify-content: space-around;
  width: 110px;
  height: 28px;
  border: 1px solid #ababab;
`
const Fx = styled.button`
  font-family: "Liberation Serif", serif;
  font-style: italic;
  font-size: 16px;
  color: #555;
`
const FormulaBox = styled.div`
  display: flex;
  align-items: center;
  justify-content: space-between;
  flex: 1;
  min-width: 0;
  height: 28px;
  padding: 0 6px 0 9px;
  border: 1px solid #ababab;

  code {
    font: 11px "DejaVu Sans Mono", monospace;
    color: #000;
    white-space: nowrap;
    overflow: hidden;
  }
`
const Str = styled.span`
  color: #a31515;
`
const Kw = styled.span`
  color: #0000ff;
`
const Ty = styled.span`
  color: #267f99;
`

const GridArea = styled.div`
  display: flex;
  flex: 1;
  min-height: 0;
  padding: 0 4px 0 3px;
`
const GridScroll = styled.div`
  flex: 1;
  min-width: 0;
  overflow: hidden;
`
const Table = styled.table`
  table-layout: fixed;
  width: 1023px;
  border-collapse: separate;
  border-spacing: 0;
`
const Col = styled.col`
  width: ${props => props.$width}px;
`
const HeadCell = styled.th`
  height: 26px;
  padding: 0;
  vertical-align: top;
  font-weight: 600;
  background: ${props => props.$selected ? '#d3f0e0' : '#efefef'};
  border-right: 1px solid #d4d4d4;
`
const HeadInner = styled.div`
  display: flex;
  align-items: center;
  height: 22px;
  padding: 0 2px 1px;

  > i { margin-left: 1px; }
  > svg { margin-left: 3px; }
`
const AnyType = styled.span`
  display: flex;
  flex-direction: column;
  width: 22px;
  line-height: 8px;
  text-align: left;
  color: #555;
  font-size: 10px;

  small { font-size: 8px; }
`
const TextType = styled.span`
  display: flex;
  width: 22px;
  color: #555;
  font-size: 9px;
  line-height: 14px;

  span:nth-child(2) { margin-top: -3px; }
  span:nth-child(3) { margin-top: 3px; }
`
const HeadName = styled.span`
  flex: 1;
  font-size: ${props => props.$arabic ? 10 : 11}px;
  text-align: left;
  white-space: nowrap;
`
const FilterBtn = styled.button`
  display: flex;
  align-items: center;
  justify-content: center;
  width: 16px;
  height: 16px;
  background: #fff;
  border: 1px solid #ababab;

  i { margin: 0; }
`
const QualityBar = styled.div`
  height: 4px;
  background: #12b3a2;
`
const StatCell = styled.td`
  height: 56px;
  padding: 0 7px 0 8px;
  background: ${props => props.$corner ? '#efefef' : '#fff'};
  border-right: 1px solid #d4d4d4;
  border-bottom: 1px solid #d4d4d4;
`
const Stat = styled.div`
  display: flex;
  align-items: center;
  height: 16px;
  font-size: 12px;
  color: #666;

  b { margin-left: auto; font-weight: 400; }
`
const Dot = styled.i`
  width: 6px;
  height: 6px;
  margin-right: 6px;
  border-radius: 3px;
  background: ${props => props.$color};
`
const Cell = styled.td`
  height: 21px;
  padding: 0 3px 0 ${props => props.$inset ? 6 : 3}px;
  line-height: 16px;
  white-space: nowrap;
  text-align: ${props => props.$number ? 'right' : 'left'};
  font-style: ${props => props.$number ? 'italic' : 'normal'};
  font-size: ${props => props.$arabic ? 10 : 11}px;
  background: ${props => props.$selected ? '#d3f0e0' : '#fff'};
  border-right: 1px solid #d4d4d4;
  border-bottom: 1px solid #d4d4d4;
`
const NumberCell = styled.th`
  padding: 0;
  font-weight: 400;
  text-align: center;
  background: #efefef;
  border-right: 1px solid #dcdcdc;
  border-bottom: 1px solid #dcdcdc;
`
const ScrollBar = styled.div`
  display: flex;
  flex-direction: column;
  align-items: center;
  flex: none;
  width: 17px;
  margin-top: 82px;
  padding: 14px 0;
  background: #f0f0f0;
`
const Thumb = styled.div`
  width: 15px;
  height: 258px;
  margin: 6px 0 auto;
  background: #cbcbcb;
`

const Settings = styled.aside`
  display: flex;
  flex-direction: column;
  flex: none;
  width: 265px;
  padding: 14px 24px 20px 10px;
  font-size: 12px;
  color: #444;
`
const SettingsHead = styled.div`
  display: flex;
  align-items: center;
  justify-content: space-between;
  height: 30px;
  margin-bottom: 13px;
  padding: 0 2px 0 4px;

  h1 {
    font-size: 19px;
    font-weight: 300;
    color: #217346;
  }
`
const SectionTitle = styled.h2`
  display: flex;
  align-items: center;
  height: 20px;
  font-size: 12px;
  && { font-weight: 600; }
  color: #217346;
`
const Fold = styled.i`
  margin: 0 7px 0 0;
  border: 3px solid transparent;
  border-right-color: #444;
  border-bottom-color: #444;
`
const SectionBody = styled.div`
  display: flex;
  flex-direction: column;
  padding: 2px 0 13px 13px;

  label { line-height: 18px; }
  a { line-height: 20px; margin-top: 6px; color: #3f6fa0; text-decoration: none; }
`
const NameInput = styled.input`
  height: 22px;
  padding: 0 5px;
  font: inherit;
  font-size: 11px;
  color: #222;
  border: 1px solid #ababab;
  outline: 0;
`
const StepList = styled.ol`
  flex: 1;
  margin: 4px 0 0 13px;
  padding: 0;
  list-style: none;
  border: 1px solid #c6c6c6;
`
const Step = styled.li`
  display: flex;
  align-items: center;
  height: 20px;
  padding: 0 8px 0 4px;
  background: ${props => props.$active ? '#d3f0e0' : 'none'};

  i { width: 16px; }
  span { flex: 1; }
`

const StatusBar = styled.footer`
  display: flex;
  align-items: center;
  gap: 12px;
  flex: none;
  height: 22px;
  padding: 0 5px;
  color: #fff;
  background: #217346;
`
const StatusRight = styled.span`
  margin-left: auto;
`

const Taskbar = styled.div`
  display: flex;
  flex: none;
  height: 30px;
  color: #fff;
  background: linear-gradient(90deg, #1b1b1c 0, #1b1b1c 38%, #1c1838 42%, #1c1838 62%, #1b1b1c 70%);
`
const TaskBtn = styled.button`
  display: flex;
  align-items: center;
  justify-content: center;
  flex: none;
  width: ${props => props.$width || 37}px;
  padding: 2px 0 0;
  font-size: 12px;
  background: ${props => props.$active ? '#4a4858' : 'none'};
  box-shadow: ${props => props.$open ? 'inset 0 -2px #76b9ed' : 'none'};
  white-space: nowrap;

  /* opened windows sit a little apart from each other */
  ${props => props.$open && 'width: 29px; margin: 0 4px;'}
  ${props => props.$active && 'width: 35px; margin: 0 1px;'}
`
const SearchBox = styled.label`
  display: flex;
  align-items: center;
  gap: 11px;
  width: 258px;
  padding-left: 12px;
  background: #f2f2f2;

  input {
    width: 200px;
    padding: 0;
    border: 0;
    background: none;
    font: 14px "Open Sans", sans-serif;
  }
  input::placeholder { color: #333; opacity: 1; }
`
const Tray = styled.div`
  display: flex;
  margin-left: auto;
`
const Weather = styled.button`
  display: flex;
  align-items: center;
  gap: 9px;
  margin-right: 12px;
  font-size: 13px;
`
const ShowDesktop = styled.i`
  width: 5px;
  margin-left: 7px;
  border-left: 1px solid #666;
`

const Activate = styled.div`
  position: absolute;
  right: 70px;
  bottom: 71px;
  width: 234px;
  color: rgba(110, 110, 110, 0.6);
  pointer-events: none;
  white-space: nowrap;

  strong, span { display: block; font-weight: 400; }
  strong { font-size: 19px; line-height: 25px; }
  span { font-size: 14px; line-height: 20px; }
`
const Watermark = styled.div`
  position: absolute;
  left: 50%;
  bottom: 0;
  width: 200px;
  margin-left: -100px;
  display: flex;
  flex-direction: column;
  align-items: center;
  color: rgba(220, 220, 220, 0.8);
  pointer-events: none;

  bdi { font: 700 64px/60px "DejaVu Sans", sans-serif; }
  span { font: 700 34px/40px Lato, sans-serif; }
`
